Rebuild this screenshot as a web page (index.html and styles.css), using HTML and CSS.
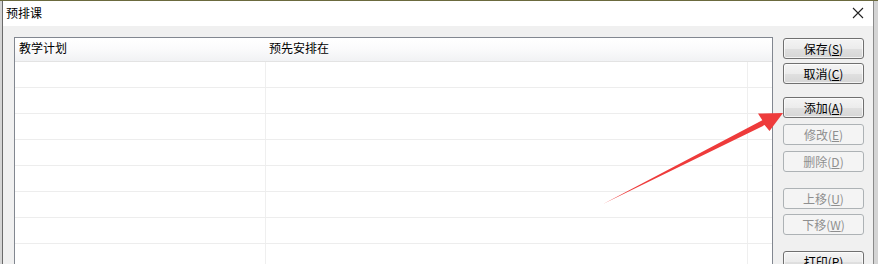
FILE: index.html
```html
<!DOCTYPE html>
<html>
<head>
<meta charset="utf-8">
<link rel="stylesheet" href="styles.css">
</head>
<body>
<div class="window">
  <div class="titlebar">
    <span class="title">预排课</span>
    <span class="close">
      <svg width="12" height="12" viewBox="0 0 12 12"><path d="M1 1L11 11M11 1L1 11" stroke="#222" stroke-width="1.1" fill="none"/></svg>
    </span>
  </div>
  <div class="content">
    <div class="list">
      <div class="header">
        <div class="hcell c1">教学计划</div>
        <div class="hcell c2">预先安排在</div>
        <div class="hcell c3"></div>
      </div>
      <div class="row"><div class="cell c1"></div><div class="cell c2"></div><div class="cell c3"></div></div>
      <div class="row"><div class="cell c1"></div><div class="cell c2"></div><div class="cell c3"></div></div>
      <div class="row"><div class="cell c1"></div><div class="cell c2"></div><div class="cell c3"></div></div>
      <div class="row"><div class="cell c1"></div><div class="cell c2"></div><div class="cell c3"></div></div>
      <div class="row"><div class="cell c1"></div><div class="cell c2"></div><div class="cell c3"></div></div>
      <div class="row"><div class="cell c1"></div><div class="cell c2"></div><div class="cell c3"></div></div>
      <div class="row"><div class="cell c1"></div><div class="cell c2"></div><div class="cell c3"></div></div>
      <div class="row"><div class="cell c1"></div><div class="cell c2"></div><div class="cell c3"></div></div>
    </div>
    <div class="buttons">
      <button class="btn">保存(<u>S</u>)</button>
      <button class="btn g4">取消(<u>C</u>)</button>
      <button class="btn g13">添加(<u>A</u>)</button>
      <button class="btn g6" disabled>修改(<u>E</u>)</button>
      <button class="btn g6" disabled>删除(<u>D</u>)</button>
      <button class="btn g16" disabled>上移(<u>U</u>)</button>
      <button class="btn g5" disabled>下移(<u>W</u>)</button>
      <button class="btn g16">打印(<u>P</u>)</button>
    </div>
  </div>
</div>
<svg class="arrow" width="878" height="264" viewBox="0 0 878 264">
  <polygon points="603,204 762.3,120.3 758,113.5 783,113 769.5,131 764.6,125.1" fill="#ee3b3b"/>
</svg>
</body>
</html>
```

FILE: styles.css
```css
html, body {
  margin: 0;
  padding: 0;
  width: 878px;
  height: 264px;
  overflow: hidden;
}
body {
  background: linear-gradient(to bottom, #6b6a3e 0, #6b6a3e 1px, #d4d4d4 1px);
  padding: 1px 4px 0 2px;
  box-sizing: border-box;
  font-family: "Noto Sans CJK SC", "Noto Sans", sans-serif;
  font-size: 12px;
  color: #000;
  position: relative;
}
.window {
  height: 263px;
  border-left: 1px solid #6a6a6a;
  border-right: 1px solid #8a8a8a;
  background: #f0f0f0;
  display: flex;
  flex-direction: column;
}
.titlebar {
  height: 25px;
  background: #fff;
  display: flex;
  align-items: center;
  justify-content: space-between;
  padding: 0 9px 0 3px;
  flex: none;
}
.title {
  line-height: 14px;
  position: relative;
  top: -1px;
}
.close {
  display: flex;
  position: relative;
  top: -1px;
}
.content {
  display: flex;
  align-items: flex-start;
  padding: 11px 0 0 11px;
  flex: 1;
  overflow: hidden;
}
.list {
  width: 757px;
  height: 260px;
  border: 1px solid #828790;
  background: #fff;
  flex: none;
}
.header {
  display: flex;
  height: 23px;
  border-bottom: 1px solid #e3e3e3;
  background: linear-gradient(to bottom, #ffffff 0%, #fbfbfc 45%, #f1f2f4 100%);
}
.hcell {
  line-height: 20px;
  box-sizing: border-box;
  white-space: nowrap;
}
.hcell.c1 { padding-left: 4px; }
.hcell.c2 { padding-left: 3px; }
.c1 { width: 251px; }
.c2 { width: 482px; }
.c3 { flex: 1; }
.row {
  display: flex;
  height: 26px;
  box-sizing: border-box;
  border-bottom: 1px solid #ededed;
}
.cell {
  box-sizing: border-box;
}
.cell.c1, .cell.c2 {
  border-right: 1px solid #efefef;
}
.buttons {
  display: flex;
  flex-direction: column;
  margin-left: 10px;
  margin-top: 1px;
  width: 81px;
  flex: none;
}
.btn {
  height: 21px;
  box-sizing: border-box;
  border: 1px solid #707070;
  border-radius: 3px;
  background: linear-gradient(to bottom, #f4f4f4 0%, #ececec 50%, #e0e0e0 51%, #d6d6d6 100%);
  font-family: "Noto Sans CJK SC", "Noto Sans", sans-serif;
  font-size: 12px;
  color: #000;
  padding: 0;
  line-height: 17px;
  text-align: center;
  box-shadow: inset 0 0 0 1px rgba(255,255,255,0.7);
}
.btn u {
  text-underline-offset: 1px;
}
.btn:disabled {
  border-color: #adb2b5;
  background: #f4f4f4;
  color: #8f8f8f;
  box-shadow: none;
}
.g4 { margin-top: 4px; }
.g5 { margin-top: 5px; }
.g6 { margin-top: 6px; }
.g13 { margin-top: 13px; }
.g16 { margin-top: 16px; }
.arrow {
  position: absolute;
  left: 0;
  top: 0;
  pointer-events: none;
}
```
